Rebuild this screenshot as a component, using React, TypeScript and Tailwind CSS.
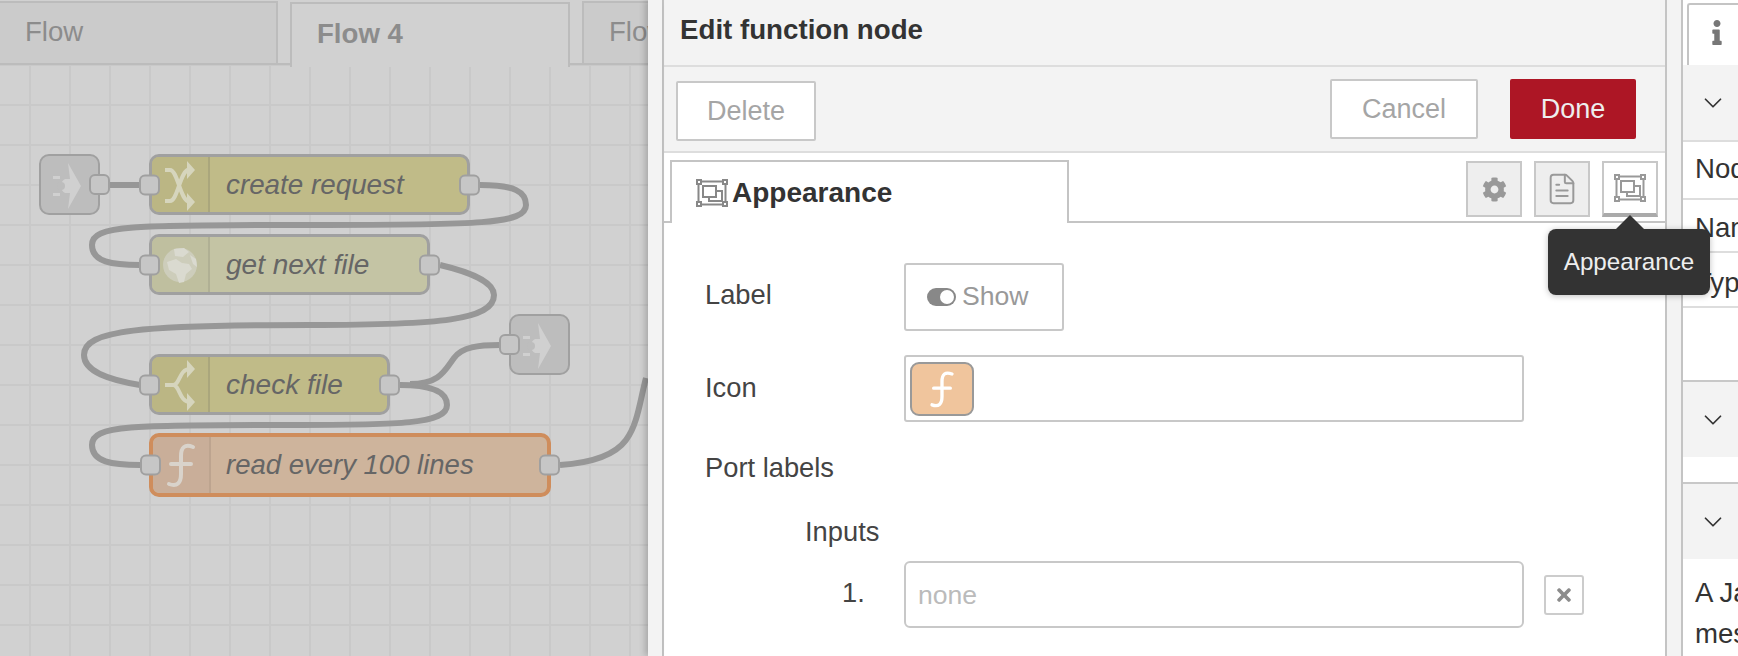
import { FaCog, FaInfo, FaTimes } from 'react-icons/fa'
import { ChevronDown, FileText } from 'lucide-react'
import type { ReactNode } from 'react'

const ShuffleIcon = () => (
  <svg viewBox="0 0 60 60" className="w-[60px] h-[60px] shrink-0" fill="none" stroke="#d6d5bd" strokeWidth="4">
    <path d="M15 15h5c8 0 10 32 20 32M15 46h5c8 0 10-32 20-32" />
    <path d="M37 6l8 9-8 9zM37 38l8 9-8 9z" fill="#d6d5bd" stroke="none" />
  </svg>
)

const GlobeIcon = () => (
  <svg viewBox="0 0 60 60" className="w-[60px] h-[60px] shrink-0">
    <circle cx="30" cy="30" r="17" fill="#cdcdbb" />
    <path d="M24 14l10-1 5 4-6 5-8-1zM17 27l9-3 6 4 7 1 3 5-6 5-2 8-5 1-3-9-7-4zM40 20l6 4 1 8-4-3z" fill="#dadad0" />
  </svg>
)

const SwitchIcon = () => (
  <svg viewBox="0 0 60 60" className="w-[60px] h-[60px] shrink-0" fill="none" stroke="#d6d5bd" strokeWidth="4">
    <path d="M15 30h8c7 0 6-16 17-16M23 30c7 0 6 17 17 17" />
    <path d="M37 5l8 9-8 9zM37 38l8 9-8 9z" fill="#d6d5bd" stroke="none" />
  </svg>
)

const FunctionIcon = ({ color = '#d9d3cb', size = 'w-[60px] h-[60px]' }: { color?: string; size?: string }) => (
  <svg viewBox="0 0 60 60" className={`${size} shrink-0`} fill="none" stroke={color} strokeWidth="4" strokeLinecap="round">
    <path d="M42 12c-8-3-12 0-12 9v18c0 9-4 13-12 10M20 29h20" />
  </svg>
)

const InjectIcon = () => (
  <svg viewBox="0 0 60 60" className="w-[60px] h-[60px]" fill="#d0d0d0">
    <path d="M27 7l13 23-13 23 2-16h-5a8 8 0 0 1 0-14h5z" />
    <path d="M12 20h7v3h-7zM12 37h7v3h-7z" />
    <circle cx="20" cy="30" r="4" fill="#bdbdbd" />
  </svg>
)

const AppearanceIcon = ({ color = '#999' }: { color?: string }) => (
  <svg viewBox="0 0 32 28" className="w-[32px] h-[28px]" fill="none" stroke={color} strokeWidth="2">
    <rect x="2.5" y="2.5" width="27" height="23" />
    <rect x="1" y="1" width="4" height="4" fill="#fff" />
    <rect x="27" y="1" width="4" height="4" fill="#fff" />
    <rect x="1" y="23" width="4" height="4" fill="#fff" />
    <rect x="27" y="23" width="4" height="4" fill="#fff" />
    <rect x="7" y="7" width="13" height="11" />
    <path d="M20 12h6v10h-13v-4" />
  </svg>
)

const Port = ({ className }: { className: string }) => (
  <div className={`absolute w-[21px] h-[21px] rounded-[6px] border-2 border-[#a0a0a0] bg-[#c6c6c6] ${className}`} />
)

const nodes = [
  { label: 'create request', pos: 'left-[149px] top-[89px] w-[321px] h-[61px] border-[3px]', tone: 'bg-[#c0bb88] border-[#a0a0a0]', head: 'bg-[#bbb684] border-[#aaa67c]', text: 'pl-[16px] text-[27.8px]', icon: <ShuffleIcon /> },
  { label: 'get next file', pos: 'left-[149px] top-[169px] w-[281px] h-[61px] border-[3px]', tone: 'bg-[#c4c4a4] border-[#a0a0a0]', head: 'bg-[#bfbf9f] border-[#b0b094]', text: 'pl-[16px] text-[28px]', icon: <GlobeIcon /> },
  { label: 'check file', pos: 'left-[149px] top-[289px] w-[241px] h-[61px] border-[3px]', tone: 'bg-[#c0bb88] border-[#a0a0a0]', head: 'bg-[#bbb684] border-[#aaa67c]', text: 'pl-[16px] text-[28px]', icon: <SwitchIcon /> },
  { label: 'read every 100 lines', pos: 'left-[149px] top-[368px] w-[402px] h-[64px] border-[4px]', tone: 'bg-[#ceb49c] border-[#cf8d5c]', head: 'bg-[#c9ae99] border-[#bda48f]', text: 'pl-[15px] text-[27.5px]', icon: <FunctionIcon /> },
]

function Canvas() {
  return (
    <div className="relative flex-1 bg-[#d1d1d1] bg-[linear-gradient(#c9c9c9_2px,transparent_2px),linear-gradient(90deg,#c9c9c9_2px,transparent_2px)] bg-[size:40px_40px] bg-[position:29px_-1px]">
      <svg viewBox="0 65 648 591" className="absolute inset-0 w-[648px] h-[591px]" fill="none" stroke="#979797" strokeWidth="6">
        <path d="M110 185H140" />
        <path d="M480 185C515 185 526 192 526 205C526 224 480 225 310 225C130 225 92 225 92 245C92 262 112 265 140 265" />
        <path d="M440 265C470 272 494 282 494 295C494 320 440 325 310 325C140 325 84 330 84 355C84 372 110 380 140 385" />
        <path d="M400 385C432 385 447 392 447 405C447 424 400 425 290 425C130 425 92 425 92 445C92 462 112 465 140 465" />
        <path d="M410 384C440 384 445 370 454 358C462 347 478 345 500 345" />
        <path d="M560 465C590 463 615 455 626 440C638 424 640 400 646 378" />
      </svg>

      <div className="absolute left-[39px] top-[89px] w-[61px] h-[61px] rounded-[10px] border-2 border-[#a0a0a0] bg-[#bdbdbd]">
        <InjectIcon />
        <Port className="right-[-12px] top-[18px]" />
      </div>
      <div className="absolute left-[509px] top-[249px] w-[61px] h-[61px] rounded-[10px] border-2 border-[#a0a0a0] bg-[#bdbdbd]">
        <InjectIcon />
        <Port className="left-[-12px] top-[18px]" />
      </div>

      {nodes.map((n) => (
        <div key={n.label} className={`absolute flex items-center rounded-[10px] ${n.pos} ${n.tone}`}>
          <div className={`flex items-center justify-center w-[58px] h-full rounded-l-[7px] border-r-2 ${n.head}`}>{n.icon}</div>
          <span className={`italic text-[#666] whitespace-nowrap ${n.text}`}>{n.label}</span>
          <Port className="left-[-13px] top-1/2 -translate-y-1/2" />
          <Port className="right-[-13px] top-1/2 -translate-y-1/2" />
        </div>
      ))}
    </div>
  )
}

function Workspace() {
  return (
    <div className="w-[648px] h-[656px] shrink-0 flex flex-col overflow-hidden bg-[#d1d1d1]">
      <div className="flex h-[65px] shrink-0 gap-[12px] border-b-2 border-[#bcbcbc] text-[27.6px] text-[#8c8c8c]">
        <div className="w-[278px] shrink-0 mt-[1px] flex items-center pl-[25px] pb-[3px] border-t-2 border-r-2 border-[#bcbcbc] bg-[#cbcbcb]">Flow</div>
        <div className="w-[280px] shrink-0 h-[65px] mt-[2px] flex items-center pl-[25px] pb-[4px] border-t-2 border-x-2 border-[#bcbcbc] bg-[#d1d1d1] font-bold relative z-10">Flow 4</div>
        <div className="w-[80px] shrink-0 mt-[1px] flex items-center pl-[25px] pb-[3px] border-t-2 border-l-2 border-[#bcbcbc] bg-[#cbcbcb]">Flow</div>
      </div>
      <Canvas />
    </div>
  )
}

const ToolBtn = ({ children, active }: { children: ReactNode; active?: boolean }) => (
  <div className={`w-[56px] h-[56px] flex items-center justify-center border-2 border-[#c8c8c8] ${active ? 'bg-white border-b-[4px] border-b-[#aaa]' : 'bg-[#eeeeee]'}`}>
    {children}
  </div>
)

const FormLabel = ({ children, className = '' }: { children: ReactNode; className?: string }) => (
  <div className={`w-[240px] shrink-0 pl-[41px] text-[27.3px] text-[#444] ${className}`}>{children}</div>
)

function EditPanel() {
  return (
    <div className="w-[1005px] h-[656px] shrink-0 flex flex-col border-x-2 border-[#c4c4c4] bg-white overflow-hidden">
      <div className="h-[67px] shrink-0 flex items-center pl-[16px] pb-[5px] border-b-2 border-[#dddddd] bg-[#f3f3f3] text-[27.7px] font-bold text-[#333]">
        Edit function node
      </div>
      <div className="h-[86px] shrink-0 flex items-start justify-between pl-[12px] pr-[29px] border-b-2 border-[#dddddd] bg-[#f3f3f3] text-[27px]">
        <button className="w-[140px] h-[60px] mt-[14px] border-2 border-[#c8c8c8] rounded-[2px] bg-white text-[#a5a5a5]">Delete</button>
        <div className="flex gap-[32px] mt-[12px]">
          <button className="w-[148px] h-[60px] border-2 border-[#c8c8c8] rounded-[2px] bg-white text-[#a5a5a5]">Cancel</button>
          <button className="w-[126px] h-[60px] rounded-[2px] bg-[#ad1625] text-[#eeeeee]">Done</button>
        </div>
      </div>

      <div className="h-[70px] shrink-0 flex justify-between pl-[6px] pr-[7px] border-b-2 border-[#c4c4c4]">
        <div className="w-[399px] h-[63px] mt-[7px] flex items-center gap-[4px] pl-[24px] border-2 border-b-0 border-[#c4c4c4] bg-white relative z-10 text-[28px] font-bold text-[#333]">
          <AppearanceIcon color="#888" />
          Appearance
        </div>
        <div className="flex gap-[12px] mt-[8px] h-[56px]">
          <ToolBtn><FaCog className="w-[25px] h-[25px] text-[#999]" /></ToolBtn>
          <ToolBtn><FileText className="w-[34px] h-[34px] text-[#999]" strokeWidth={1.4} /></ToolBtn>
          <ToolBtn active><AppearanceIcon /></ToolBtn>
        </div>
      </div>

      <div className="flex items-center mt-[40px]">
        <FormLabel className="pb-[3px]">Label</FormLabel>
        <div className="w-[160px] h-[68px] flex items-center gap-[6px] pl-[21px] border-2 border-[#c8c8c8] rounded-[3px] text-[26.6px] text-[#999]">
          <span className="relative w-[29px] h-[18px] rounded-full bg-[#888]">
            <span className="absolute right-[2px] top-[2px] w-[14px] h-[14px] rounded-full bg-white" />
          </span>
          Show
        </div>
      </div>
      <div className="flex items-center mt-[24px]">
        <FormLabel>Icon</FormLabel>
        <div className="w-[620px] h-[67px] flex items-center pl-[4px] border-2 border-[#c8c8c8] rounded-[3px]">
          <div className="w-[64px] h-[54px] flex items-center justify-center rounded-[9px] border-2 border-[#999] bg-[#f0c59d]">
            <FunctionIcon color="#ffffff" size="w-[50px] h-[50px]" />
          </div>
        </div>
      </div>
      <div className="mt-[29px] pl-[41px] text-[27.3px] text-[#444] leading-[34px]">Port labels</div>
      <div className="mt-[30px] pl-[141px] text-[27.3px] text-[#444] leading-[34px]">Inputs</div>
      <div className="flex items-center mt-[12px]">
        <div className="w-[240px] shrink-0 pl-[178px] text-[27.3px] text-[#444] -mt-[3px]">1.</div>
        <div className="w-[620px] h-[67px] flex items-center pl-[12px] pt-[2px] border-2 border-[#c8c8c8] rounded-[6px] text-[26.6px] text-[#bbbbbb]">none</div>
        <div className="ml-[20px] w-[40px] h-[40px] flex items-center justify-center border-2 border-[#cccccc] rounded-[3px]">
          <FaTimes className="w-[18px] h-[20px] text-[#8c8c8c]" />
        </div>
      </div>
    </div>
  )
}

const SideHead = ({ className }: { className: string }) => (
  <div className={`flex items-center pl-[15px] bg-[#f3f3f3] ${className}`}>
    <ChevronDown className="w-[30px] h-[30px] text-[#333]" strokeWidth={1.4} />
  </div>
)

const SideRow = ({ text, className }: { text: string; className: string }) => (
  <div className={`flex items-center pl-[12px] border-b-2 border-[#dddddd] text-[27.6px] text-[#333] whitespace-nowrap ${className}`}>{text}</div>
)

function Sidebar() {
  return (
    <div className="flex-1 h-[656px] overflow-hidden border-l-2 border-[#c4c4c4] bg-white">
      <div className="h-[65px] pl-[4px] pt-[3px]">
        <div className="w-[62px] h-[62px] flex items-center justify-center border-t-2 border-l-2 border-[#c4c4c4] rounded-tl-[3px] bg-white">
          <FaInfo className="w-[18px] h-[25px] text-[#777] mr-[5px] mb-[5px]" />
        </div>
      </div>
      <SideHead className="h-[77px] border-b-2 border-[#dddddd]" />
      <SideRow text="Node" className="h-[58px] pb-[2px]" />
      <SideRow text="Name" className="h-[53px] pt-[5px]" />
      <SideRow text="Type" className="h-[55px] pt-[6px]" />
      <div className="h-[72px]" />
      <SideHead className="h-[77px] border-t-2 border-[#c8c8c8]" />
      <div className="h-[25px]" />
      <SideHead className="h-[77px] border-t-2 border-[#c8c8c8]" />
      <div className="pl-[12px] pt-[13px] text-[27.6px] leading-[41px] text-[#333] whitespace-nowrap">
        <div>A JavaScript function</div>
        <div>messages</div>
      </div>
    </div>
  )
}

export default function App() {
  return (
    <div className="relative flex w-[1738px] h-[656px] overflow-hidden font-['Liberation_Sans',Arial,sans-serif]">
      <Workspace />
      <div className="w-[14px] shrink-0 bg-[#f3f3f3] relative z-10 shadow-[-3px_0_6px_rgba(0,0,0,0.2)]" />
      <EditPanel />
      <div className="w-[14px] shrink-0 bg-[#f3f3f3]" />
      <Sidebar />

      <div className="absolute left-[1548px] top-[229px] z-20 w-[162px] h-[66px] flex items-center justify-center rounded-[8px] bg-[#333333] text-[24.2px] text-[#eeeeee] shadow-[0_1px_6px_rgba(0,0,0,0.25)]">
        <span className="absolute left-[68px] top-[-14px] w-0 h-0 border-x-[14px] border-b-[14px] border-x-transparent border-b-[#333333]" />
        Appearance
      </div>
    </div>
  )
}
